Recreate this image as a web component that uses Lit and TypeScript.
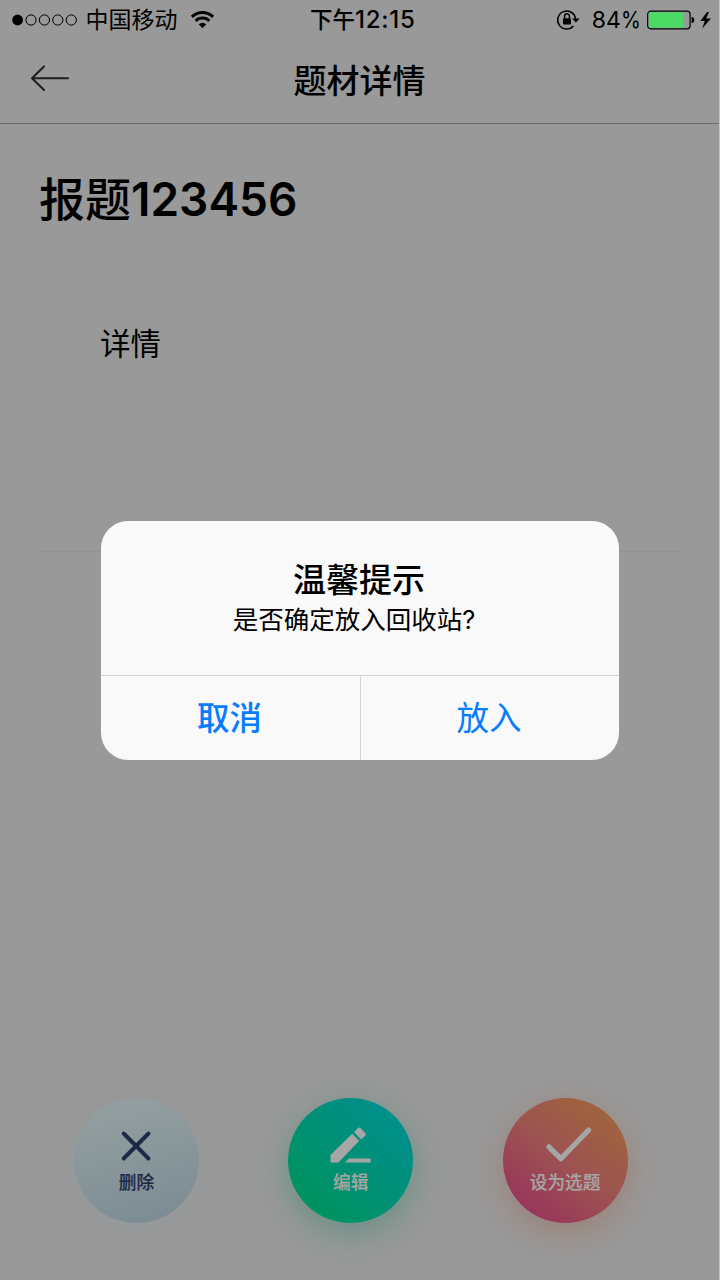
import { LitElement, html, css, svg } from "lit";
import { customElement } from "lit/decorators.js";

const base = css`
  :host { display: block; box-sizing: border-box; }
  *, *::before, *::after { box-sizing: border-box; }
  svg { display: block; overflow: visible; }
`;

@customElement("status-bar")
class StatusBar extends LitElement {
  static styles = [base, css`
    .bar { height: 40px; display: grid; grid-template-columns: 1fr auto 1fr; align-items: center; padding: 0 8.5px 0 12px; color: #000; }
    .side { display: flex; align-items: center; height: 40px; }
    .right { justify-content: flex-end; }
    .text { font-size: 23px; line-height: 40px; white-space: nowrap; }
    .carrier { margin-left: 7.5px; margin-right: 13.5px; }
    .time { font-weight: 500; font-size: 22.5px; padding-left: 3px; }
    .digits { font-size: 24px; letter-spacing: 0.7px; }
    .percent { font-size: 23px; margin-left: 12px; margin-right: 6px; display: flex; }
    .sign { display: inline-block; transform: scaleX(0.88); transform-origin: left; margin-right: -3px; }
  `];
  render() {
    return html`<div class="bar">
      <div class="side">
        <svg width="66" height="12" viewBox="0 0 66 12">
          <circle cx="5.6" cy="6" r="5.4" fill="#000"></circle>
          ${[19, 32.4, 45.8, 59.3].map((x) => svg`<circle cx=${x} cy="6" r="5.1" fill="none" stroke="#000" stroke-width="1"></circle>`)}
        </svg>
        <span class="text carrier">中国移动</span>
        <svg width="23" height="18" viewBox="0 0 23 18" fill="none" stroke="#000">
          <path d="M0.9 5.9C6.8 -0.1 16.2 -0.1 22.1 5.9" stroke-width="3"></path>
          <path d="M4.6 9.9C8.4 6.1 14.6 6.1 18.4 9.9" stroke-width="2.9"></path>
          <path d="M7.7 13.3Q11.5 10.1 15.3 13.3L11.5 17.2Z" fill="#000" stroke="none"></path>
        </svg>
      </div>
      <span class="text time">下午<span class="digits">12:15</span></span>
      <div class="side right">
        <svg width="23" height="20" viewBox="0 0 23 20">
          <path d="M16.4 16A9 9 0 1 1 18.6 8.8" fill="none" stroke="#000" stroke-width="1.5"></path>
          <path d="M15.2 8.5H22.6L18.9 12.5Z"></path>
          <rect x="6" y="8.2" width="8" height="6.2" rx="0.8"></rect>
          <path d="M7.6 8.5V6.3A2.4 2.6 0 0 1 12.4 6.3V8.5" fill="none" stroke="#000" stroke-width="1.4"></path>
        </svg>
        <span class="text percent">84<span class="sign">%</span></span>
        <svg width="64" height="20" viewBox="0 0 64 20">
          <rect x="0.7" y="1.2" width="42.4" height="17.6" rx="3" fill="none" stroke="#000" stroke-width="1.2"></rect>
          <rect x="1.8" y="2.3" width="34.4" height="15.4" rx="1.5" fill="#4cd964"></rect>
          <path d="M44.6 7Q47.2 7 47.2 10T44.6 13Z"></path>
          <path d="M60 2L53.3 11H57.8L55.2 18.4L64 8.6H59.2L62 2Z"></path>
        </svg>
      </div>
    </div>`;
  }
}

@customElement("nav-bar")
class NavBar extends LitElement {
  static styles = [base, css`
    .bar { height: 84px; display: grid; grid-template-columns: 1fr auto 1fr; border-bottom: 1px solid #6c6c6c; padding: 0 30px; }
    .back { padding-top: 24px; }
    .title { font-size: 33px; font-weight: 500; line-height: 48px; color: #000; padding-top: 17px; }
  `];
  render() {
    return html`<header class="bar">
      <div class="back">
        <svg width="40" height="28" viewBox="0 0 40 28" fill="none" stroke="#1f1f1f" stroke-width="2.1" stroke-linecap="round" stroke-linejoin="round">
          <path d="M14 2.4L2 14.3L14 26M2 14.3H38"></path>
        </svg>
      </div>
      <div class="title">题材详情</div>
    </header>`;
  }
}

@customElement("round-action")
class RoundAction extends LitElement {
  static properties = { kind: {}, label: {} };
  declare kind: string;
  declare label: string;
  static styles = [base, css`
    .disc { width: 125px; height: 125px; border-radius: 50%; display: flex; flex-direction: column; align-items: center; padding-top: 24px; color: #a6a6a6; }
    .remove { color: #1e2946; background: linear-gradient(165deg, #929e9f 15%, #7c8c94 95%); box-shadow: 0 8px 30px rgba(140, 150, 160, 0.25); }
    .edit { background: linear-gradient(45deg, #009358 5%, #009079 55%, #008f8e 90%); box-shadow: 0 10px 34px rgba(55, 135, 115, 0.5); }
    .choose { background: linear-gradient(38deg, #98315e 8%, #9d5450 52%, #a06838 95%); box-shadow: 0 10px 34px rgba(160, 105, 85, 0.5); }
    .label { font-size: 17.7px; font-weight: 500; line-height: 26px; margin-top: 2px; white-space: nowrap; -webkit-text-stroke: 0.2px currentColor; }
  `];
  glyph() {
    if (this.kind === "remove") return svg`<path d="M11.7 11.5L36.5 36.5M36.5 11.5L11.7 36.5" fill="none" stroke="currentColor" stroke-width="4" stroke-linecap="round"></path>`;
    if (this.kind === "edit") return svg`<path d="M4.5 40.5V33L26.2 11.8L33.2 18.8L12.5 40.5ZM28 10L31.8 6.2Q33.2 4.9 34.6 6.2L39.3 10.9Q40.6 12.2 39.3 13.6L35.2 17.4ZM18.8 40.5L23 36.6H44.5V40.5Z" fill="currentColor"></path>`;
    return svg`<path d="M7.9 24.8L19.8 36.7L47.7 8" fill="none" stroke="currentColor" stroke-width="5.2" stroke-linecap="round" stroke-linejoin="round"></path>`;
  }
  render() {
    return html`<div class="disc ${this.kind}">
      <svg width="49" height="46" viewBox="0 0 49 46">${this.glyph()}</svg>
      <span class="label">${this.label}</span>
    </div>`;
  }
}

@customElement("confirm-dialog")
class ConfirmDialog extends LitElement {
  static styles = [base, css`
    .box { width: 518px; height: 239px; border-radius: 27px; background: #f9f9f9; display: flex; flex-direction: column; overflow: hidden; text-align: center; }
    .body { height: 154px; padding-top: 35px; }
    .title { font-size: 33px; font-weight: 500; line-height: 48px; color: #000; padding-right: 2px; }
    .message { font-size: 25.5px; line-height: 32px; color: #000; padding-right: 12px; }
    .actions { flex: 1; display: grid; grid-template-columns: 259px 1fr; border-top: 1px solid #d6d6d8; }
    .action { font-size: 32.5px; line-height: 82px; color: #087cff; padding: 2px 2px 0 0; }
    .action + .action { border-left: 1px solid #d6d6d8; }
    .strong { font-weight: 500; }
  `];
  render() {
    return html`<div class="box">
      <div class="body">
        <div class="title">温馨提示</div>
        <div class="message">是否确定放入回收站?</div>
      </div>
      <div class="actions">
        <div class="action strong">取消</div>
        <div class="action">放入</div>
      </div>
    </div>`;
  }
}

@customElement("app-root")
class AppRoot extends LitElement {
  static styles = [base, css`
    :host { width: 720px; height: 1280px; background: #999; border-right: 1px solid #c4c4c4; position: relative; overflow: hidden; font-family: Inter, "Noto Sans CJK SC", sans-serif; }
    .page { display: flex; flex-direction: column; height: 1280px; }
    .article { margin: 0 37px 0 38px; height: 428px; border-bottom: 1px solid #929292; padding-top: 42px; color: #000; }
    .heading { margin: 0; font-size: 46px; font-weight: 600; line-height: 66px; white-space: nowrap; padding-left: 1px; }
    .cjk { font-weight: 500; }
    .detail { font-size: 30.5px; line-height: 44px; margin: 90px 0 0 62px; }
    .actions { display: flex; gap: 89.3px; margin-top: auto; padding: 0 0 57.5px 74px; }
    .overlay { position: absolute; inset: 0; display: flex; align-items: flex-start; padding: 521px 0 0 101px; }
  `];
  render() {
    return html`<main class="page">
        <status-bar></status-bar>
        <nav-bar></nav-bar>
        <section class="article">
          <h1 class="heading"><span class="cjk">报题</span>123456</h1>
          <p class="detail">详情</p>
        </section>
        <div class="actions">
          <round-action kind="remove" label="删除"></round-action>
          <round-action kind="edit" label="编辑"></round-action>
          <round-action kind="choose" label="设为选题"></round-action>
        </div>
      </main>
      <div class="overlay"><confirm-dialog></confirm-dialog></div>`;
  }
}
